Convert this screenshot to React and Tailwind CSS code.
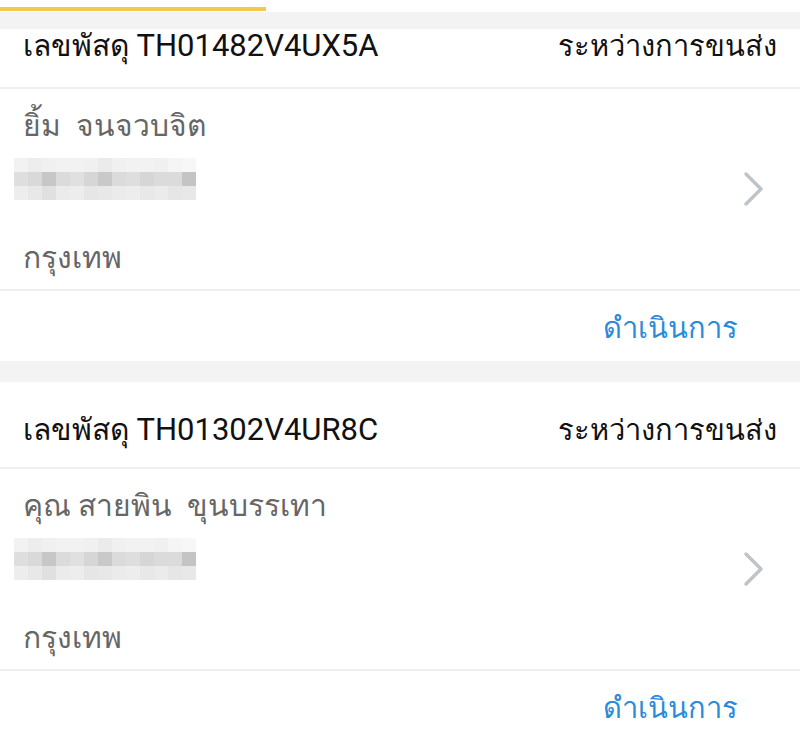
import React from 'react';

const parcels = [
  { id: 'TH01482V4UX5A', name: 'ยิ้ม\u00a0\u00a0จนจวบจิต', city: 'กรุงเทพ', cut: true },
  { id: 'TH01302V4UR8C', name: 'คุณ สายพิน\u00a0\u00a0ขุนบรรเทา', city: 'กรุงเทพ' },
];

// pixelated blur over the address line
const blurCells = [
  [0.95, 0.93, 0.94, 0.95, 0.95, 0.94, 0.92, 0.94, 0.95, 0.95, 0.94, 0.96, 0.97],
  [0.87, 0.85, 0.78, 0.86, 0.88, 0.84, 0.79, 0.86, 0.87, 0.84, 0.86, 0.86, 0.77],
  [0.93, 0.91, 0.88, 0.92, 0.93, 0.9, 0.91, 0.92, 0.93, 0.91, 0.92, 0.9, 0.91],
];

const Blurred = () => (
  <div className="flex flex-col w-[184px]">
    {blurCells.map((row, i) => (
      <div key={i} className="flex">
        {row.map((v, j) => {
          const c = Math.round(v * 255);
          return (
            <div
              key={j}
              className="h-[14px] w-[14px]"
              style={{ backgroundColor: `rgb(${c},${c},${c})` }}
            />
          );
        })}
      </div>
    ))}
  </div>
);

const Chevron = () => (
  <svg width="24" height="38" viewBox="0 0 24 38" fill="none">
    <path d="M4 4 L19 19 L4 34" stroke="#bfc4c9" strokeWidth="3.5" strokeLinecap="round" strokeLinejoin="round" />
  </svg>
);

const Card = ({ p }) => (
  <div className="bg-white">
    <div
      className={`flex justify-between px-[23px] text-[30px] text-[#111] border-b-2 border-[#efefef] ${
        p.cut ? 'h-[60px] items-start leading-[34px]' : 'h-[87px] items-center pt-[12px]'
      }`}
    >
      <span>
        เลขพัสดุ <span className="text-[31px]">{p.id}</span>
      </span>
      <span className="text-[29px]">ระหว่างการขนส่ง</span>
    </div>
    <div className="flex items-center justify-between pl-[23px] pr-[34px] h-[202px] border-b-2 border-[#efefef]">
      <div className="flex flex-col">
        <span className="text-[30px] text-[#666] leading-[40px] mt-[5px]">{p.name}</span>
        <div className="mt-[12px] -ml-[9px]">
          <Blurred />
        </div>
        <span className="text-[30px] text-[#666] leading-[40px] mt-[38px]">{p.city}</span>
      </div>
      <Chevron />
    </div>
    <div className="flex justify-end items-center h-[70px] pr-[62px] pt-[6px]">
      <span className="text-[29px] text-[#2a8bd8]">ดำเนินการ</span>
    </div>
  </div>
);

export default function App() {
  return (
    <div
      className="w-[800px] h-[737px] overflow-hidden bg-[#f3f3f3]"
      style={{ fontFamily: 'Roboto, "Noto Sans", "DejaVu Sans", sans-serif' }}
    >
      <div className="bg-white h-[12px] pt-[7px]">
        <div className="h-[4px] w-[266px] bg-[#f2c94c]" />
      </div>
      <div className="h-[17px] bg-[#f3f3f3]" />
      <Card p={parcels[0]} />
      <div className="h-[21px] bg-[#f3f3f3]" />
      <Card p={parcels[1]} />
    </div>
  );
}
